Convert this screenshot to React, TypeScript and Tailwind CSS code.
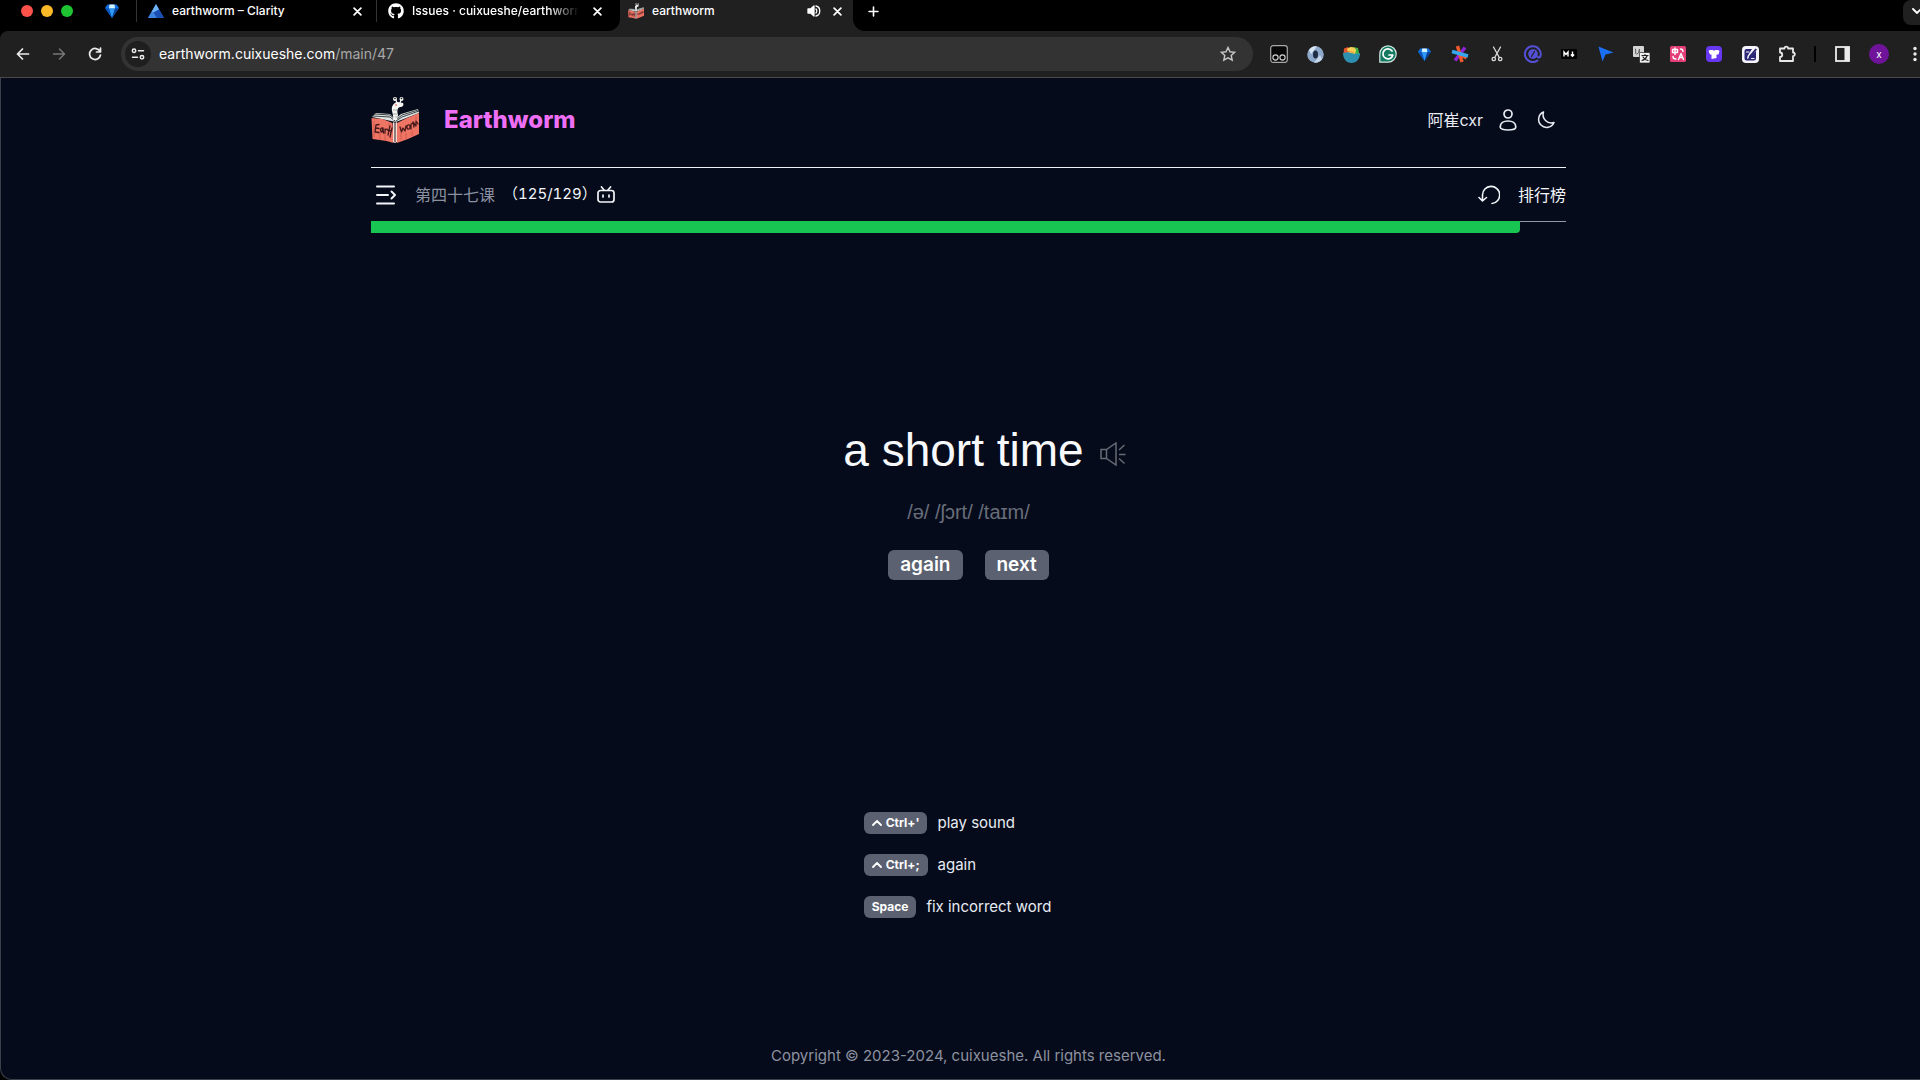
import type { ReactNode } from "react";
import { FaGithub } from "react-icons/fa";

const strokeProps = {
  fill: "none",
  stroke: "currentColor",
  strokeLinecap: "round",
  strokeLinejoin: "round",
} as const;

function GemIcon({ size = 14 }: { size?: number }) {
  return (
    <svg width={size} height={size} viewBox="0 0 14 14">
      <path d="M2.5 0.5h9L14 4 7 14 0 4z" fill="#1171e0" />
      <path d="M4.5 0.5h5L10 4.5H4z" fill="#d6f2ff" />
      <path d="M4 4.5h6L7 14z" fill="#2e9af5" />
      <path d="M0 4l4 .5L7 14z" fill="#0a55bd" />
      <path d="M14 4l-4 .5L7 14z" fill="#093f93" />
    </svg>
  );
}

function ClarityIcon() {
  return (
    <svg width="16" height="14" viewBox="0 0 16 14">
      <path d="M8 0l8 14H0z" fill="#2a6fd6" />
      <path d="M8 0l3 5.5-5.5 3L3.5 8z" fill="#6fb2f5" />
      <path d="M3.5 8l2 .5L9 14H0z" fill="#3d84e0" />
      <path d="M11 5.5L16 14H9L5.5 8.5z" fill="#1c4fb4" />
    </svg>
  );
}

function BookLogo({ size }: { size: number }) {
  return (
    <svg width={size} height={size} viewBox="0 0 48 48">
      {/* pages */}
      <path d="M1 21l4-4 14 1 5 5 6-5 17-5 1 4-23 9z" fill="#dfe5e4" />
      <path d="M2 20l17 1 5 4M4 18l15 1 5 4M25 25l6-4 17-6M26 23l5-4 16-5" {...strokeProps} stroke="#3d4446" strokeWidth="1" />
      {/* covers */}
      <path d="M0.500 22l11 1 10 4 1 20-7-2-14-2z" fill="#ee7464" />
      <path d="M26 27l10-5 12-5v21l-11 5-11 4z" fill="#ee7464" />
      <path d="M22 26l2 1 2-1v20l-2 1-2-1z" fill="#f4dcd6" />
      <path d="M24 27v19" stroke="#2b1f22" strokeWidth="1" />
      <path d="M3 25v16M9 36v8M14 37v8M18 27v4M30 37v7M35 37v6M41 35v5M45 20v4" stroke="#c94e45" strokeWidth="1" opacity="0.7" />
      {/* scribbled title */}
      <path d="M5 29l-1 7M5 29l3-.5M5 32l3 .5M4 36l4 .5M11 32c-2 0-2 4 0 4l1-4 .5 5M14 33v4M14 34l2-1M19 30l-2 9M21 32l-2 9M16.500 34l4 1" {...strokeProps} stroke="#47191b" strokeWidth="1.300" />
      <path d="M29 31l1.500 5 1.500-4 2 3 1-5M37 29c-2 1-1 5 1 4s1-5-1-4M40 33v-5l2-1M43 31l-1-5 3 4v-5l2 3" {...strokeProps} stroke="#47191b" strokeWidth="1.300" />
      {/* worm */}
      <path d="M22 24c1-5-2-9-1-13 1-3 3-5 6-5l5 1c1 2 0 4-3 4-3 1-3 4-2 8l-1 5z" fill="#f4f4f2" />
      <path d="M22 14h4M22 18h4M24 21h3" stroke="#a8a8a8" strokeWidth="1" />
      <circle cx="24" cy="3" r="2" fill="#f4f4f2" />
      <circle cx="30.500" cy="3" r="2" fill="#f4f4f2" />
      <circle cx="24" cy="2.500" r="0.800" fill="#111" />
      <circle cx="30.500" cy="2.500" r="0.800" fill="#111" />
      <path d="M25 4l1 3M30 4l-1 3" stroke="#f4f4f2" strokeWidth="1.200" />
      <circle cx="25" cy="9" r="1" fill="#ee8a80" />
    </svg>
  );
}

function CloseIcon() {
  return (
    <svg width="9" height="9" viewBox="0 0 8 8" {...strokeProps} strokeWidth="1.500">
      <path d="M1 1l6 6M7 1L1 7" />
    </svg>
  );
}

function Extension({ label, children }: { label: string; children: ReactNode }) {
  return (
    <button type="button" aria-label={label} className="flex h-5 w-[18px] items-center justify-center">
      {children}
    </button>
  );
}

function Extensions() {
  return (
    <div className="flex w-[526px] shrink-0 items-center justify-between">
      <Extension label="Tampermonkey">
        <svg width="18" height="18" viewBox="0 0 18 18">
          <rect x="0.700" y="0.700" width="16.600" height="16.600" rx="2.500" fill="#080808" stroke="#a9a9a9" strokeWidth="1.200" />
          <circle cx="5.500" cy="12.500" r="2.600" fill="none" stroke="#d5d5d5" strokeWidth="1.100" />
          <circle cx="12.500" cy="12.500" r="2.600" fill="none" stroke="#d5d5d5" strokeWidth="1.100" />
        </svg>
      </Extension>
      <Extension label="Proxy">
        <svg width="17" height="17" viewBox="0 0 17 17">
          <circle cx="8.500" cy="8.500" r="8.300" fill="#8ea9cb" />
          <path d="M2 4a8 8 0 0 1 8-3.700l-3 4-3 4z" fill="#d8e5f3" />
          <path d="M15 13a8 8 0 0 1-8 3.600l3-3.600 3-4z" fill="#c5d6ea" />
          <ellipse cx="8.500" cy="8.500" rx="2.500" ry="4" fill="#1e2c44" />
        </svg>
      </Extension>
      <Extension label="Bowl">
        <svg width="17" height="17" viewBox="0 0 17 17">
          <path d="M0.500 9L1 2.500l4-1.500 3 8z" fill="#e45632" />
          <path d="M10 1l5 1 1.500 7H8z" fill="#43b04a" />
          <path d="M4 3.500C5 0 12 0 13 4l-1 4-6-1z" fill="#f8cf55" />
          <path d="M4 5l7 1.500" stroke="#e8963a" strokeWidth="1.200" />
          <path d="M0 7c3 0 4-1 6-.5S11 9 17 7c0 6-3.500 10-8.500 10S0 13 0 7z" fill="#2d90b0" />
        </svg>
      </Extension>
      <Extension label="Grammarly">
        <svg width="18" height="18" viewBox="0 0 18 18">
          <path d="M9 .8A8.200 8.200 0 1 1 9 17.200H.8V9A8.200 8.200 0 0 1 9 .8z" fill="#137a62" stroke="#d3e7e1" strokeWidth="1.200" />
          <path d="M13 6a5 5 0 1 0 .8 4H10" {...strokeProps} stroke="#fff" strokeWidth="1.700" />
        </svg>
      </Extension>
      <Extension label="Gem">
        <GemIcon size={13} />
      </Extension>
      <Extension label="Asterisk">
        <svg width="18" height="18" viewBox="0 0 18 18" strokeWidth="3.400">
          <path d="M14 2.500L4 15.500" stroke="#8d25d8" />
          <path d="M6.500 1l4.500 16" stroke="#f1582c" />
          <path d="M9 9l6.500 4" stroke="#f1582c" />
          <path d="M1 6.500l16 4.500" stroke="#35a8f0" />
        </svg>
      </Extension>
      <Extension label="Scissors">
        <svg width="12" height="16" viewBox="0 0 12 16" {...strokeProps} stroke="#dcdcdc" strokeWidth="1.300">
          <path d="M2.500 1l5.500 10M9.500 1L4 11" />
          <circle cx="2.800" cy="13" r="1.700" />
          <circle cx="9.200" cy="13" r="1.700" />
        </svg>
      </Extension>
      <Extension label="Compass">
        <svg width="18" height="18" viewBox="0 0 18 18" {...strokeProps} stroke="#5550d8" strokeWidth="2">
          <path d="M13.500 15.500A7.900 7.900 0 1 1 16.500 11c-.5 2-2.500 2-3 .5" />
          <circle cx="9" cy="9" r="4.800" fill="#5550d8" stroke="none" />
          <path d="M7.500 11.500l3-5" stroke="#202020" strokeWidth="1.200" />
        </svg>
      </Extension>
      <Extension label="Markdown">
        <svg width="16" height="10" viewBox="0 0 16 10">
          <rect width="16" height="10" rx="1" fill="#000" />
          <path d="M3 7.500V3l2 2.500L7 3v4.500M11.500 2.500v4.500M9.800 5.500l1.700 1.700 1.700-1.700" fill="none" stroke="#fff" strokeWidth="1.400" />
        </svg>
      </Extension>
      <Extension label="Pointer">
        <svg width="16" height="16" viewBox="0 0 16 16">
          <path d="M0.500 0.500l15 6-8 2L4.500 15.500z" fill="#1b6ff5" />
        </svg>
      </Extension>
      <Extension label="Translate">
        <svg width="17" height="17" viewBox="0 0 17 17">
          <rect width="11" height="11" rx="1" fill="#d4d4d4" />
          <path d="M2.500 3c1 1-1 5 1 5s3-3 3-5c-.5 2-1 5 1 5" {...strokeProps} stroke="#555" strokeWidth="1" />
          <rect x="6.500" y="6.500" width="10.500" height="10.500" rx="1" fill="#f1f1f1" stroke="#202020" strokeWidth="0.700" />
          <path d="M9 9.500h6M12 8.500v1M14 10c-1 3-3 4-5 4.500M10 11c1 2 3 3 5 3.500" {...strokeProps} stroke="#222" strokeWidth="1.200" />
        </svg>
      </Extension>
      <Extension label="Immersive Translate">
        <svg width="16" height="16" viewBox="0 0 16 16" {...strokeProps} stroke="#fff" strokeWidth="1.400">
          <rect width="16" height="16" rx="1.500" fill="#e33e77" stroke="none" />
          <path d="M2.500 3.500h5v3h-5zM5 2v6.500M8.500 13.500l2.500-6 2.500 6M9.500 11.500h3M3 10.500c0 2 1 2.500 3 2.500M10.500 3c2 0 2.500 1 2.500 2.500" />
        </svg>
      </Extension>
      <Extension label="Toolbox">
        <svg width="16" height="16" viewBox="0 0 16 16">
          <rect width="16" height="16" rx="4" fill="#6737f2" />
          <path d="M2.500 5l1.500-1h3l1 1 1-1h3l1.500 1-1 3.500h-2V12l-5 1V8.500H4z" fill="#fff" />
        </svg>
      </Extension>
      <Extension label="Notes">
        <svg width="17" height="17" viewBox="0 0 17 17">
          <rect width="17" height="17" rx="4" fill="#f5f5fb" />
          <path d="M4.500 3H10l-4.500 7-.5 3 3-1.500L14 5v7.500a2 2 0 0 1-2 2H4.500a2 2 0 0 1-2-2V5a2 2 0 0 1 2-2z" fill="#2b2677" />
          <path d="M13.500 2.500l1.500 1-6 8-2.500 1 .5-2.500z" fill="#2b2677" />
          <path d="M4.500 6h2.500M9.500 12.500H12" {...strokeProps} stroke="#f5f5fb" strokeWidth="1.200" />
        </svg>
      </Extension>
      <Extension label="Extensions">
        <svg width="18" height="18" viewBox="0 0 18 18" {...strokeProps} stroke="#e8e8e8" strokeWidth="1.800">
          <path d="M2 3.500h4.500a1.800 1.800 0 0 1 3.600 0H15v4a1.800 1.800 0 0 1 0 3.600V16H2v-4a2.200 2.200 0 0 0 0-4.500z" />
        </svg>
      </Extension>
    </div>
  );
}

function TabStrip() {
  return (
    <div className="flex h-[31px] bg-[#202020] text-xs font-medium text-white">
      <div className="flex shrink-0 items-start rounded-br-xl bg-black">
        <div className="flex h-[22px] w-[136px] items-center pl-[21px]">
          <div className="flex gap-2">
            <span className="size-3 rounded-full bg-[#fb5149]" />
            <span className="size-3 rounded-full bg-[#fcb928]" />
            <span className="size-3 rounded-full bg-[#1fc433]" />
          </div>
          <span className="ml-8">
            <GemIcon />
          </span>
        </div>

        <div className="flex h-[22px] w-60 items-center border-l border-[#333] pr-[14px] pl-[11px]">
          <ClarityIcon />
          <span className="ml-2 flex-1 whitespace-nowrap">earthworm – Clarity</span>
          <button type="button" aria-label="Close tab">
            <CloseIcon />
          </button>
        </div>

        <div className="flex h-[22px] w-[244px] items-center border-l border-[#333] pr-[18px] pl-[11px]">
          <FaGithub size={16} className="shrink-0" />
          <span className="mr-[14px] ml-2 flex-1 overflow-hidden whitespace-nowrap [mask-image:linear-gradient(to_right,black_82%,transparent)]">
            Issues · cuixueshe/earthworm
          </span>
          <button type="button" aria-label="Close tab">
            <CloseIcon />
          </button>
        </div>
      </div>

      <div className="flex h-[22px] w-[233px] shrink-0 items-center pr-[11px] pl-2">
        <BookLogo size={16} />
        <span className="ml-2 flex-1">earthworm</span>
        <button type="button" aria-label="Mute tab">
          <svg width="14" height="14" viewBox="0 0 14 14" {...strokeProps} strokeWidth="1.300">
            <path d="M1 5h2.500L7 2v10L3.500 9H1z" fill="currentColor" />
            <path d="M9 5c1 1 1 3 0 4M9 2c5 1 5 9 0 10" />
          </svg>
        </button>
        <button type="button" aria-label="Close tab" className="ml-3">
          <CloseIcon />
        </button>
      </div>

      <div className="flex flex-1 items-start rounded-bl-xl bg-black pl-[15px]">
        <button type="button" aria-label="New tab" className="flex h-[22px] items-center">
          <svg width="11" height="11" viewBox="0 0 11 11" {...strokeProps} strokeWidth="1.600">
            <path d="M5.500 1v9M1 5.500h9" />
          </svg>
        </button>
        <button type="button" aria-label="Search tabs" className="ml-auto flex h-[25px] w-[17px] items-center overflow-hidden rounded-bl-lg rounded-tl-lg bg-[#202020] pb-1 pl-[9px]">
          <svg width="10" height="6" viewBox="0 0 10 6" className="shrink-0" {...strokeProps} strokeWidth="1.800">
            <path d="M1 1l4 4 4-4" />
          </svg>
        </button>
      </div>
    </div>
  );
}

function Toolbar() {
  return (
    <div className="flex h-[47px] items-center rounded-tl-lg border-b border-[#4a4a4a] bg-[#202020] pl-4 text-[#ececec]">
      <button type="button" aria-label="Back">
        <svg width="14" height="14" viewBox="0 0 14 14" {...strokeProps} strokeWidth="1.700">
          <path d="M12.500 7H1.500M6.500 2l-5 5 5 5" />
        </svg>
      </button>
      <button type="button" aria-label="Forward" className="ml-[22px] text-[#777]">
        <svg width="14" height="14" viewBox="0 0 14 14" {...strokeProps} strokeWidth="1.500">
          <path d="M1.500 7h11M7.500 2l5 5-5 5" />
        </svg>
      </button>
      <button type="button" aria-label="Reload" className="ml-[22px]">
        <svg width="14" height="14" viewBox="0 0 14 14" {...strokeProps} strokeWidth="1.700">
          <path d="M12 4.500A5.500 5.500 0 1 0 12.500 8M12.500 1v4h-4" />
        </svg>
      </button>

      <div className="mr-[17px] ml-[19px] flex h-[34px] flex-1 items-center rounded-full bg-[#333] pr-[17px] pl-1">
        <button type="button" aria-label="View site information" className="flex size-[26px] items-center justify-center rounded-full bg-[#1f1f1f]">
          <svg width="14" height="12" viewBox="0 0 14 12" {...strokeProps} strokeWidth="1.500">
            <circle cx="3" cy="2.700" r="1.700" />
            <path d="M7.500 2.700h5M1.500 9.300h5" />
            <circle cx="11" cy="9.300" r="1.700" />
          </svg>
        </button>
        <div className="ml-2 flex-1 text-sm text-white">
          earthworm.cuixueshe.com<span className="text-[#a8a8a8]">/main/47</span>
        </div>
        <button type="button" aria-label="Bookmark this tab" className="text-[#c8c8c8]">
          <svg width="16" height="16" viewBox="0 0 16 16" fill="none" stroke="currentColor" strokeWidth="1.400">
            <path d="M8 1.500l2 4.300 4.700.5-3.500 3.200 1 4.700L8 11.800l-4.200 2.400 1-4.700L1.300 6.300 6 5.800z" />
          </svg>
        </button>
      </div>

      <Extensions />
      <div className="ml-[18px] h-4 w-0.5 bg-black" />
      <button type="button" aria-label="Side panel" className="ml-[19px]">
        <svg width="15" height="16" viewBox="0 0 15 16">
          <rect x="1" y="1" width="13" height="14" fill="none" stroke="#ececec" strokeWidth="1.800" />
          <rect x="9.500" y="1" width="5" height="14" fill="#ececec" />
        </svg>
      </button>
      <button type="button" aria-label="Profile" className="ml-[19px] flex size-5 items-center justify-center rounded-full bg-[#6f149a] text-[10px] text-white">
        x
      </button>
      <button type="button" aria-label="Menu" className="mr-[3px] ml-6">
        <svg width="4" height="16" viewBox="0 0 4 16" fill="currentColor">
          <circle cx="2" cy="2.500" r="1.700" />
          <circle cx="2" cy="8" r="1.700" />
          <circle cx="2" cy="13.500" r="1.700" />
        </svg>
      </button>
    </div>
  );
}

function Header() {
  return (
    <header className="flex h-[89px] items-center pb-1.5 text-[#e8ebf3]">
      <a href="#home" className="flex items-center gap-[25px]">
        <BookLogo size={48} />
        <span className="text-2xl font-extrabold text-[#ee6ff5]">Earthworm</span>
      </a>
      <div className="ml-auto flex items-center pr-[11px]">
        <span className="text-base">阿崔cxr</span>
        <button type="button" aria-label="Profile" className="ml-4">
          <svg width="18" height="22" viewBox="0 0 18 22" {...strokeProps} strokeWidth="1.700">
            <circle cx="9" cy="5" r="4" />
            <path d="M1.200 18c0-4 3.500-6 7.800-6s7.800 2 7.800 6c0 2-3.500 3-7.800 3s-7.800-1-7.800-3z" />
          </svg>
        </button>
        <button type="button" aria-label="Dark mode" className="ml-5">
          <svg width="18" height="18" viewBox="0 0 18 18" {...strokeProps} strokeWidth="1.500">
            <path d="M6.500 1A8 8 0 1 0 17 11.500 8.300 8.300 0 0 1 6.500 1z" />
          </svg>
        </button>
      </div>
    </header>
  );
}

function CourseBar({ current, total }: { current: number; total: number }) {
  const percent = ((current - 1) / total) * 100;

  return (
    <div>
      <div className="flex h-[55px] items-center border-t border-b border-t-[#f0f2f6] border-b-[#9499a5] text-base text-[#f3f5fa]">
        <button type="button" aria-label="Course contents" className="ml-1">
          <svg width="22" height="20" viewBox="0 0 22 20" {...strokeProps} strokeWidth="2">
            <path d="M2 1.500h17M2 10h11M2 18.500h17M16.500 6.500L20 10l-3.500 3.500" />
          </svg>
        </button>
        <span className="ml-[18px] text-[#8b91a1]">第四十七课</span>
        <span className="ml-2 text-[15px] tabular-nums">（125/129）</span>
        <button type="button" aria-label="Watch video" className="ml-0">
          <svg width="18" height="17" viewBox="0 0 18 17" {...strokeProps} strokeWidth="1.700">
            <rect x="1" y="4.500" width="16" height="11.500" rx="2.500" />
            <path d="M4.500 1l2.500 3M13.500 1L11 4M6 9v2M12 9v2" />
          </svg>
        </button>
        <button type="button" aria-label="Restart" className="ml-auto">
          <svg width="22" height="20" viewBox="0 0 22 20" {...strokeProps} strokeWidth="1.600">
            <path d="M14 18.500A8.600 8.600 0 1 0 4.500 10v5.500M1 12.500l3.500 3.500L8.500 12.500" />
          </svg>
        </button>
        <button type="button" className="ml-[18px]">
          排行榜
        </button>
      </div>
      <div className="-mt-px h-3" role="progressbar" aria-valuenow={current} aria-valuemax={total}>
        <div className="h-full rounded-br-sm bg-[#18c452]" style={{ width: `${percent}%` }} />
      </div>
    </div>
  );
}

function Answer() {
  return (
    <section className="flex flex-col items-center">
      <div className="flex items-center pl-8">
        <h1 className="font-['Liberation_Sans',sans-serif] text-[46px] leading-[48px] text-[#f8f9fc]">a short time</h1>
        <button type="button" aria-label="Play sound" className="mt-2 ml-4 text-[#686b73]">
          <svg width="26" height="24" viewBox="0 0 26 24" fill="none" stroke="currentColor" strokeWidth="1.500">
            <path d="M1 7.500h5.500L16 1v22L6.500 16.500H1zM6.500 7.500v9M19 8l5.500-5M19 12.500h6.500M19 16.500l5.500 5" />
          </svg>
        </button>
      </div>
      <p className="mt-6 font-['Liberation_Sans',sans-serif] text-xl text-[#696e7b]">/ə/ /ʃɔrt/ /taɪm/</p>
      <div className="mt-6 flex gap-[22px] text-[19px] font-semibold text-white">
        <button type="button" className="h-[30px] rounded-md bg-[#5b6170] px-3">
          again
        </button>
        <button type="button" className="h-[30px] rounded-md bg-[#5b6170] px-3">
          next
        </button>
      </div>
    </section>
  );
}

function Shortcut({ keys, ctrl = false, children }: { keys: string; ctrl?: boolean; children: ReactNode }) {
  return (
    <button type="button" className="flex h-[22px] items-center text-[15px] text-[#e8ebf3]">
      <kbd className="flex h-[22px] items-center gap-1 rounded-md bg-[#5b6170] px-2 font-[Inter,sans-serif] text-xs font-bold text-white">
        {ctrl && (
          <svg width="10" height="6" viewBox="0 0 10 6" {...strokeProps} strokeWidth="1.800">
            <path d="M1 5l4-4 4 4" />
          </svg>
        )}
        {keys}
      </kbd>
      <span className="ml-[10px]">{children}</span>
    </button>
  );
}

export default function App() {
  return (
    <div className="flex min-h-screen flex-col bg-black font-[Inter,'Noto_Sans_CJK_SC',sans-serif]">
      <TabStrip />
      <Toolbar />
      {/* the window runs past the right edge, so the page centre sits a little right */}
      <main className="flex flex-1 flex-col items-center rounded-bl-xl border-b border-l border-[#3c404b] bg-[#050b1a] pl-4">
        <div className="flex w-full max-w-[1195px] flex-1 flex-col">
          <Header />
          <CourseBar current={125} total={129} />
          <div className="pt-[193px]">
            <Answer />
          </div>
          <div className="mt-[232px] flex flex-col items-start gap-5 self-center pr-[22px]">
            <Shortcut ctrl keys="Ctrl+'">
              play sound
            </Shortcut>
            <Shortcut ctrl keys="Ctrl+;">
              again
            </Shortcut>
            <Shortcut keys="Space">fix incorrect word</Shortcut>
          </div>
          <footer className="mt-auto pb-3 text-center text-[15px] text-[#8d92a0]">
            Copyright © 2023-2024, cuixueshe. All rights reserved.
          </footer>
        </div>
      </main>
    </div>
  );
}
